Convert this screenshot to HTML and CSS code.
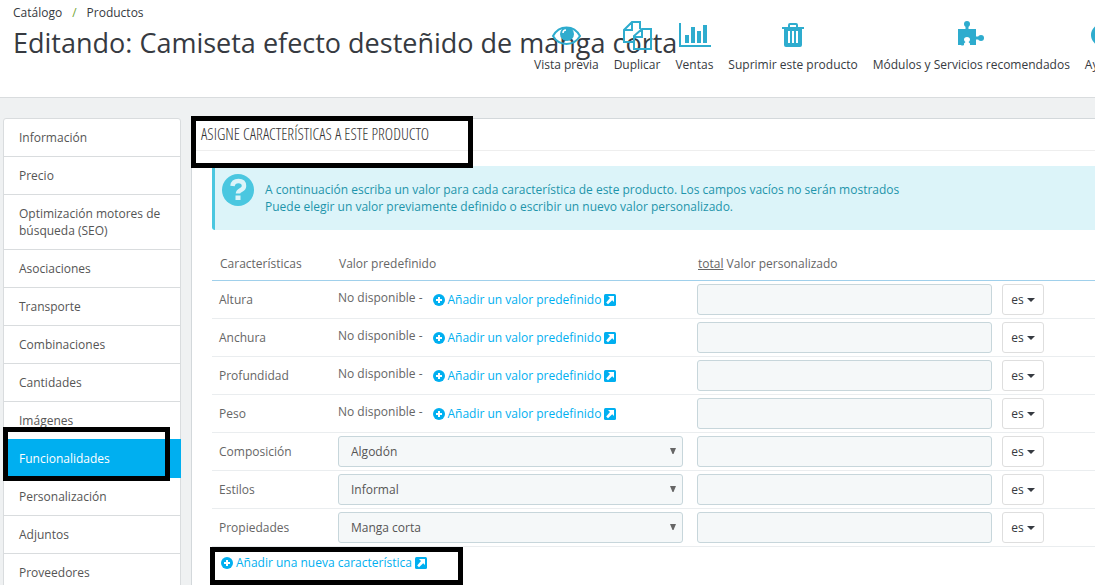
FILE: index.html
```html
<!DOCTYPE html>
<html lang="es">
<head>
<meta charset="utf-8">
<title>Editando: Camiseta efecto desteñido de manga corta</title>
<link rel="stylesheet" href="styles.css">
</head>
<body>
<svg class="sprite" aria-hidden="true">
  <symbol id="plus" viewBox="0 0 12 12"><circle cx="6" cy="6" r="6"/><path d="M5 3h2v2h2v2H7v2H5V7H3V5h2z" fill="#fff"/></symbol>
  <symbol id="external" viewBox="0 0 12 12"><rect width="12" height="12" rx="1.500"/><path d="M4 2h6v6L8.200 6.200 4 10.200 2.200 8.400 6 4z" fill="#fff"/></symbol>
  <symbol id="arrow" viewBox="0 0 6 6"><path d="M0 0h6L3.500 6h-1z"/></symbol>
</svg>
<header class="header">
  <nav class="breadcrumb" aria-label="Ruta"><a href="#">Catálogo</a><span class="slash">/</span><a href="#">Productos</a></nav>
  <h1 class="title">Editando: Camiseta efecto desteñido de manga corta</h1>
  <nav class="toolbar" aria-label="Acciones">
    <a href="#"><svg class="tool-icon" viewBox="0 0 32 32"><path d="M3 16C9 4.500 24 4.500 30 16C24 26.500 9 26.500 3 16Z" fill="none" stroke="currentColor" stroke-width="2"/><circle cx="17" cy="14" r="7"/><path d="M13 13q0-3 3-3" fill="none" stroke="#fff" stroke-width="1.500"/></svg>Vista previa</a>
    <a href="#"><svg class="tool-icon" viewBox="0 0 32 32"><path d="M13 22H3V10l8-8h8v7M3 10h8V2M13 16l8-7h9v20H13zM13 17h8V9" fill="none" stroke="currentColor" stroke-width="2"/></svg>Duplicar</a>
    <a href="#"><svg class="tool-icon" viewBox="0 0 32 32"><path d="M1 3h2v22h30v2H1zM7 15h4v8H7zM13 7h4v16h-4zM19 11h4v12h-4zM25 5h4v18h-4z"/></svg>Ventas</a>
    <a href="#"><svg class="tool-icon" viewBox="0 0 32 32"><path fill-rule="evenodd" d="M5 7h6V5q0-2 2-2h6q2 0 2 2v2h6v2h-2v16q0 2-2 2H9q-2 0-2-2V9H5zM13 7h6V5h-6zM11 11v12h2V11zM15 11v12h2V11zM19 11v12h2V11z"/></svg>Suprimir este producto</a>
    <a href="#"><svg class="tool-icon" viewBox="0 0 32 32"><circle cx="12" cy="4" r="3"/><circle cx="26" cy="18" r="3"/><path d="M3 9h7.500V5h3v4H21v7.500h4v3h-4V25h-6v-1.500l-1.500-1.500q1.500-1 1.500-2.500 0-2.500-3-2.500t-3 2.500q0 1.500 1.500 2.500L9 23.500V25q-2 1-3 0H3z"/></svg>Módulos y Servicios recomendados</a>
    <a href="#"><svg class="tool-icon" viewBox="0 0 32 32"><circle cx="16" cy="15" r="11"/><path d="M12 12q0-4 4-4t4 4q0 2-4 4v2M16 20v3" fill="none" stroke="#fff" stroke-width="3"/></svg>Ayuda</a>
  </nav>
</header>
<div class="layout">
  <nav class="tabs" aria-label="Secciones">
    <a href="#">Información</a>
    <a href="#">Precio</a>
    <a href="#">Optimización motores de búsqueda (SEO)</a>
    <a href="#">Asociaciones</a>
    <a href="#">Transporte</a>
    <a href="#">Combinaciones</a>
    <a href="#">Cantidades</a>
    <a href="#">Imágenes</a>
    <a href="#" class="active" aria-current="page">Funcionalidades<span class="mark mark-tab"></span></a>
    <a href="#">Personalización</a>
    <a href="#">Adjuntos</a>
    <a href="#">Proveedores</a>
  </nav>
  <main class="panel">
    <h2 class="heading">ASIGNE CARACTERÍSTICAS A ESTE PRODUCTO<span class="mark mark-heading"></span></h2>
    <div class="alert">
      <svg class="help" viewBox="0 0 32 32"><circle cx="16" cy="16" r="16"/><path d="M10.500 12Q11 7 16.500 7T22 12q0 2.500-3 4t-3 3.500" fill="none" stroke="#dcf4f9" stroke-width="4.500"/><path d="M13.500 21.500h5v4.500h-5z" fill="#dcf4f9"/></svg>
      <p>A continuación escriba un valor para cada característica de este producto. Los campos vacíos no serán mostrados<br>Puede elegir un valor previamente definido o escribir un nuevo valor personalizado.</p>
    </div>
    <table class="features">
      <thead><tr><th class="name">Características</th><th class="preset">Valor predefinido</th><th><u>total</u> Valor personalizado</th></tr></thead>
      <tbody>
        <tr><td>Altura</td><td><div class="none">No disponible - <a class="add" href="#"><svg><use href="#plus"/></svg>Añadir un valor predefinido<svg><use href="#external"/></svg></a></div></td><td><div class="custom"><input type="text" aria-label="Altura"><button type="button">es<span class="caret"></span></button></div></td></tr>
        <tr><td>Anchura</td><td><div class="none">No disponible - <a class="add" href="#"><svg><use href="#plus"/></svg>Añadir un valor predefinido<svg><use href="#external"/></svg></a></div></td><td><div class="custom"><input type="text" aria-label="Anchura"><button type="button">es<span class="caret"></span></button></div></td></tr>
        <tr><td>Profundidad</td><td><div class="none">No disponible - <a class="add" href="#"><svg><use href="#plus"/></svg>Añadir un valor predefinido<svg><use href="#external"/></svg></a></div></td><td><div class="custom"><input type="text" aria-label="Profundidad"><button type="button">es<span class="caret"></span></button></div></td></tr>
        <tr><td>Peso</td><td><div class="none">No disponible - <a class="add" href="#"><svg><use href="#plus"/></svg>Añadir un valor predefinido<svg><use href="#external"/></svg></a></div></td><td><div class="custom"><input type="text" aria-label="Peso"><button type="button">es<span class="caret"></span></button></div></td></tr>
        <tr><td>Composición</td><td><div class="choice"><select aria-label="Composición predefinida"><option>Algodón</option></select><svg><use href="#arrow"/></svg></div></td><td><div class="custom"><input type="text" aria-label="Composición"><button type="button">es<span class="caret"></span></button></div></td></tr>
        <tr><td>Estilos</td><td><div class="choice"><select aria-label="Estilo predefinido"><option>Informal</option></select><svg><use href="#arrow"/></svg></div></td><td><div class="custom"><input type="text" aria-label="Estilos"><button type="button">es<span class="caret"></span></button></div></td></tr>
        <tr><td>Propiedades</td><td><div class="choice"><select aria-label="Propiedad predefinida"><option>Manga corta</option></select><svg><use href="#arrow"/></svg></div></td><td><div class="custom"><input type="text" aria-label="Propiedades"><button type="button">es<span class="caret"></span></button></div></td></tr>
      </tbody>
    </table>
    <div class="new-row"><a class="add" href="#"><svg><use href="#plus"/></svg>Añadir una nueva característica<svg><use href="#external"/></svg></a><span class="mark mark-new"></span></div>
  </main>
</div>
</body>
</html>
```
FILE: styles.css
```css
* { box-sizing: border-box; }
html { overflow: hidden; }
body { display: flex; flex-direction: column; margin: 0; height: 100vh; overflow: hidden; background: #eff1f2; color: #555; font: 12px/17px "Open Sans", "Noto Sans", sans-serif; }
a { color: inherit; text-decoration: none; }
svg { fill: currentColor; }
.sprite { position: absolute; width: 0; height: 0; }

.header { position: relative; flex: none; height: 98px; padding: 4px 13px 0; background: #fff; border-bottom: 1px solid #d9dcde; color: #363a41; }
.breadcrumb { display: flex; gap: 10px; }
.slash { color: #72a536; }
.title { margin: 4px 0 0; font-size: 27px; font-weight: 400; line-height: 36px; white-space: nowrap; }
.toolbar { position: absolute; top: 20px; left: 534px; display: flex; gap: 15px; white-space: nowrap; }
.toolbar a { display: flex; flex-direction: column; align-items: center; gap: 4px; }
.tool-icon { width: 32px; height: 32px; color: #2eacce; overflow: visible; }

.layout { display: flex; flex: 1; align-items: flex-start; gap: 10px; min-height: 0; padding: 20px 0 0 3px; overflow: hidden; }
.tabs { flex: 0 0 178px; background: #fff; border: 1px solid #d9dcde; border-radius: 3px; }
.tabs a { display: block; padding: 10px 15px; border-bottom: 1px solid #d9dcde; }
.tabs .active { position: relative; margin: -1px -1px 0; padding: 11px 16px 10px; background: #00aff0; border-color: #00aff0; color: #fff; }

.panel { flex: 1; align-self: stretch; min-width: 0; padding-left: 20px; background: #fff; border: 1px solid #d3d8db; border-width: 1px 0 0 1px; }
.heading { position: relative; margin: 0 0 15px -20px; padding: 0 9px; border-bottom: 1px solid #eee; color: #333; font: 300 16px/31px "Ubuntu Condensed", "Open Sans Condensed Light", "Roboto Condensed", "Open Sans Condensed", "Open Sans", sans-serif; }
.alert { display: flex; gap: 11px; height: 64px; padding: 8px 7px; background: #dcf4f9; border-left: 3px solid #4ac7e0; border-radius: 3px 0 0 3px; color: #1e94ab; white-space: nowrap; }
.alert p { margin: 7px 0 0; }
.help { flex: none; width: 32px; height: 32px; color: #4ac7e0; }

.features { width: 100%; margin-top: 17px; border-collapse: separate; border-spacing: 0; table-layout: fixed; color: #666; }
.features th { height: 34px; padding: 0 8px; border-bottom: 1px solid #a0d0eb; font-weight: 400; text-align: left; }
.features td { height: 38px; padding: 3px 7px; border-bottom: 1px solid #eaedef; white-space: nowrap; }
.features .name { width: 119px; }
.features .preset { width: 359px; }
.none { display: flex; gap: 10px; height: 21px; }
.add { display: inline-flex; align-items: center; gap: 3px; color: #00aff0; }
.add svg { width: 12px; height: 12px; }
.choice { position: relative; }
.choice svg { position: absolute; top: 12px; right: 7px; width: 6px; height: 6px; }
select, input { height: 31px; border: 1px solid #c7d6db; border-radius: 3px; background: #f5f8f9; font: inherit; color: #555; }
select { display: block; width: 100%; padding: 0 12px; appearance: none; }
.custom { display: flex; gap: 10px; }
.custom input { width: 295px; }
.custom button { display: flex; align-items: center; justify-content: center; gap: 3px; width: 42px; height: 31px; padding: 0; border: 1px solid #dedede; border-radius: 3px; background: #fff; color: #363a41; font: inherit; }
.caret { border: 4px solid transparent; border-top-color: currentColor; border-bottom: 0; }
.new-row { position: relative; padding: 7px 9px; }

.mark { position: absolute; border: 5px solid #000; pointer-events: none; }
.mark-heading { top: -3px; left: -1px; width: 282px; height: 52px; }
.mark-tab { z-index: 1; top: -12px; left: 0; width: 167px; height: 54px; }
.mark-new { top: 0; left: -2px; width: 253px; height: 38px; }
```
